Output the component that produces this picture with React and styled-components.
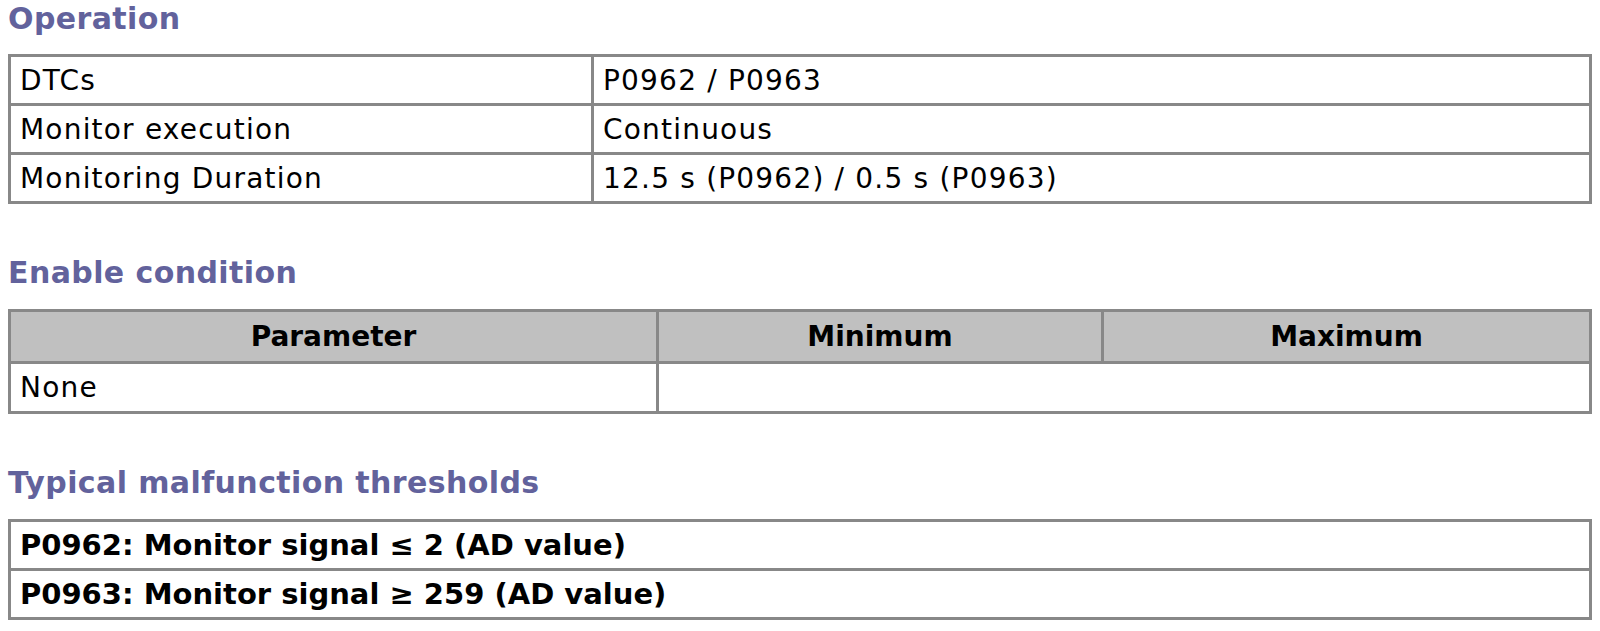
import React from 'react'
import styled, { createGlobalStyle } from 'styled-components'

const GlobalStyle = createGlobalStyle`
  body {
    margin: 0;
    padding: 0 8px 0 8px;
    background: #ffffff;
    font-family: "DejaVu Sans", Verdana, sans-serif;
    color: #000000;
  }
`

const App = () => {
  return (
    <Page>
      <GlobalStyle />
      <Heading>Operation</Heading>
      <Table>
        <colgroup>
          <col style={{ width: 583 }} />
          <col />
        </colgroup>
        <tbody>
          <Row>
            <Cell>DTCs</Cell>
            <Cell>P0962 / P0963</Cell>
          </Row>
          <Row>
            <Cell>Monitor execution</Cell>
            <Cell>Continuous</Cell>
          </Row>
          <Row>
            <Cell>Monitoring Duration</Cell>
            <Cell>12.5 s (P0962) / 0.5 s (P0963)</Cell>
          </Row>
        </tbody>
      </Table>

      <Heading $gap>Enable condition</Heading>
      <Table>
        <colgroup>
          <col style={{ width: 648 }} />
          <col style={{ width: 445 }} />
          <col />
        </colgroup>
        <thead>
          <HeadRow>
            <HeadCell>Parameter</HeadCell>
            <HeadCell>Minimum</HeadCell>
            <HeadCell>Maximum</HeadCell>
          </HeadRow>
        </thead>
        <tbody>
          <Row $h={50}>
            <Cell>None</Cell>
            <Cell colSpan={2}></Cell>
          </Row>
        </tbody>
      </Table>

      <Heading $gap>Typical malfunction thresholds</Heading>
      <Table>
        <tbody>
          <Row>
            <Cell $bold>P0962: Monitor signal ≤ 2 (AD value)</Cell>
          </Row>
          <Row>
            <Cell $bold>P0963: Monitor signal ≥ 259 (AD value)</Cell>
          </Row>
        </tbody>
      </Table>
    </Page>
  )
}

const Page = styled.div`
  display: flex;
  flex-direction: column;
`

const Heading = styled.h3`
  margin: ${(p) => (p.$gap ? '52px 0 19px' : '2px 0 18px')};
  height: 34px;
  line-height: 34px;
  font-size: 30px;
  letter-spacing: 0.4px;
  font-weight: bold;
  color: #62629c;
`

const Table = styled.table`
  width: 100%;
  table-layout: fixed;
  border-collapse: collapse;
  border: 3px solid #888888;
`

const Row = styled.tr`
  height: ${(p) => p.$h || 49}px;
`

const HeadRow = styled.tr`
  height: 52px;
  background: #c0c0c0;
`

const Cell = styled.td`
  border: 3px solid #888888;
  padding: 0 9px;
  font-size: ${(p) => (p.$bold ? '29px' : '28px')};
  letter-spacing: ${(p) => (p.$bold ? '0' : '1.2px')};
  font-weight: ${(p) => (p.$bold ? 'bold' : 'normal')};
  white-space: nowrap;
  vertical-align: middle;
`

const HeadCell = styled.th`
  border: 3px solid #888888;
  padding: 0 9px;
  font-size: 28px;
  font-weight: bold;
  text-align: center;
`

export default App
